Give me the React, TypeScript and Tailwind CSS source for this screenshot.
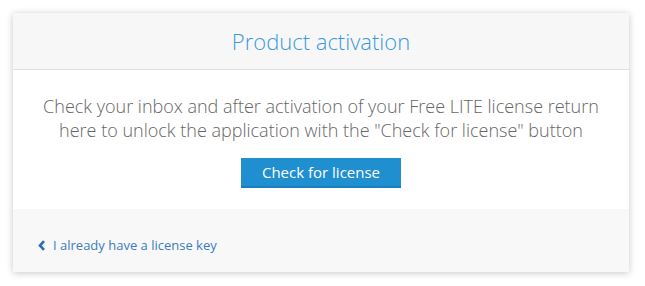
const App = () => {
  return (
    <div className="w-[645px] h-[286px] bg-white pt-[13px] pl-[13px] font-['Open_Sans',sans-serif]">
      <div className="w-[616px] h-[259px] flex flex-col bg-white shadow-[0_1px_7px_rgba(0,0,0,0.22)]">
        {/* Header */}
        <div className="h-[57px] flex items-center justify-center bg-[#f7f7f7] border-b border-[#e0e0e0]">
          <h1 className="text-[22px] font-light text-[#3d9ad8] leading-none">Product activation</h1>
        </div>

        {/* Body */}
        <div className="h-[139px] flex flex-col items-center pt-[24px]">
          <p className="text-[18px] font-light text-[#666] leading-[24px] text-center">
            Check your inbox and after activation of your Free LITE license return
            <br />
            here to unlock the application with the "Check for license" button
          </p>
          <button className="mt-[16px] w-[160px] h-[30px] bg-[#1f8fd0] border-b-2 border-[#1a80bd] text-white text-[15px] leading-none">
            Check for license
          </button>
        </div>

        {/* Footer */}
        <div className="flex-1 bg-[#f8f8f8] flex items-center pl-[25px] pt-[10px]">
          <a href="#" className="flex items-center gap-[8px] text-[13px] text-[#3b7dbd]">
            <svg width="7" height="11" viewBox="0 0 7 11" className="text-[#2c6fb3]">
              <path d="M6 1.2 L2 5.5 L6 9.8" fill="none" stroke="currentColor" strokeWidth="2.6" />
            </svg>
            I already have a license key
          </a>
        </div>
      </div>
    </div>
  );
};

export default App;
